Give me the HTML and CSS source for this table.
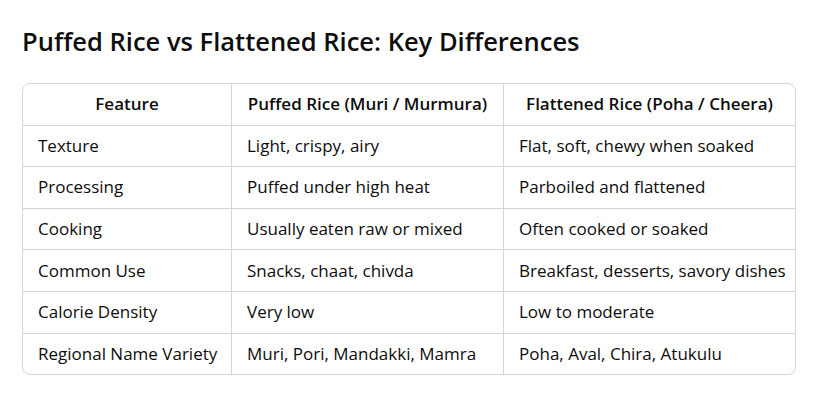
FILE: index.html
```html
<!DOCTYPE html>
<html>
<head>
<meta charset="utf-8">
<link rel="stylesheet" href="styles.css">
</head>
<body>
<div class="page">
  <h2 class="title">Puffed Rice vs Flattened Rice: Key Differences</h2>
  <table class="cmp">
    <colgroup>
      <col class="c1"><col class="c2"><col class="c3">
    </colgroup>
    <thead>
      <tr><th>Feature</th><th>Puffed Rice (Muri / Murmura)</th><th>Flattened Rice (Poha / Cheera)</th></tr>
    </thead>
    <tbody>
      <tr><td>Texture</td><td>Light, crispy, airy</td><td>Flat, soft, chewy when soaked</td></tr>
      <tr><td>Processing</td><td>Puffed under high heat</td><td>Parboiled and flattened</td></tr>
      <tr><td>Cooking</td><td>Usually eaten raw or mixed</td><td>Often cooked or soaked</td></tr>
      <tr><td>Common Use</td><td>Snacks, chaat, chivda</td><td>Breakfast, desserts, savory dishes</td></tr>
      <tr><td>Calorie Density</td><td>Very low</td><td>Low to moderate</td></tr>
      <tr><td>Regional Name Variety</td><td>Muri, Pori, Mandakki, Mamra</td><td>Poha, Aval, Chira, Atukulu</td></tr>
    </tbody>
  </table>
</div>
</body>
</html>
```
FILE: styles.css
```css
html, body {
  margin: 0;
  padding: 0;
  background: #ffffff;
}
.page {
  padding: 0 0 0 22px;
  width: 772px;
  font-family: "Open Sans", "Noto Sans", sans-serif;
  color: #0d0d0d;
}
.title {
  margin: 0;
  padding-top: 22px;
  font-size: 25.5px;
  font-weight: 600;
  line-height: 38px;
  height: 61px;
}
.cmp {
  width: 772px;
  table-layout: fixed;
  border-collapse: separate;
  border-spacing: 0;
  border: 1px solid #d5d5d5;
  border-radius: 8px;
  font-size: 17px;
}
.c1 { width: 209px; }
.c2 { width: 272px; }
.c3 { width: 291px; }
.cmp th, .cmp td {
  padding: 8.3px 15px;
  line-height: 24px;
  text-align: left;
  border-right: 1px solid #d5d5d5;
  border-bottom: 1px solid #d5d5d5;
  white-space: nowrap;
}
.cmp th {
  text-align: center;
  font-weight: 600;
}
.cmp th:last-child, .cmp td:last-child { border-right: none; }
.cmp tbody tr:last-child td { border-bottom: none; }
```
